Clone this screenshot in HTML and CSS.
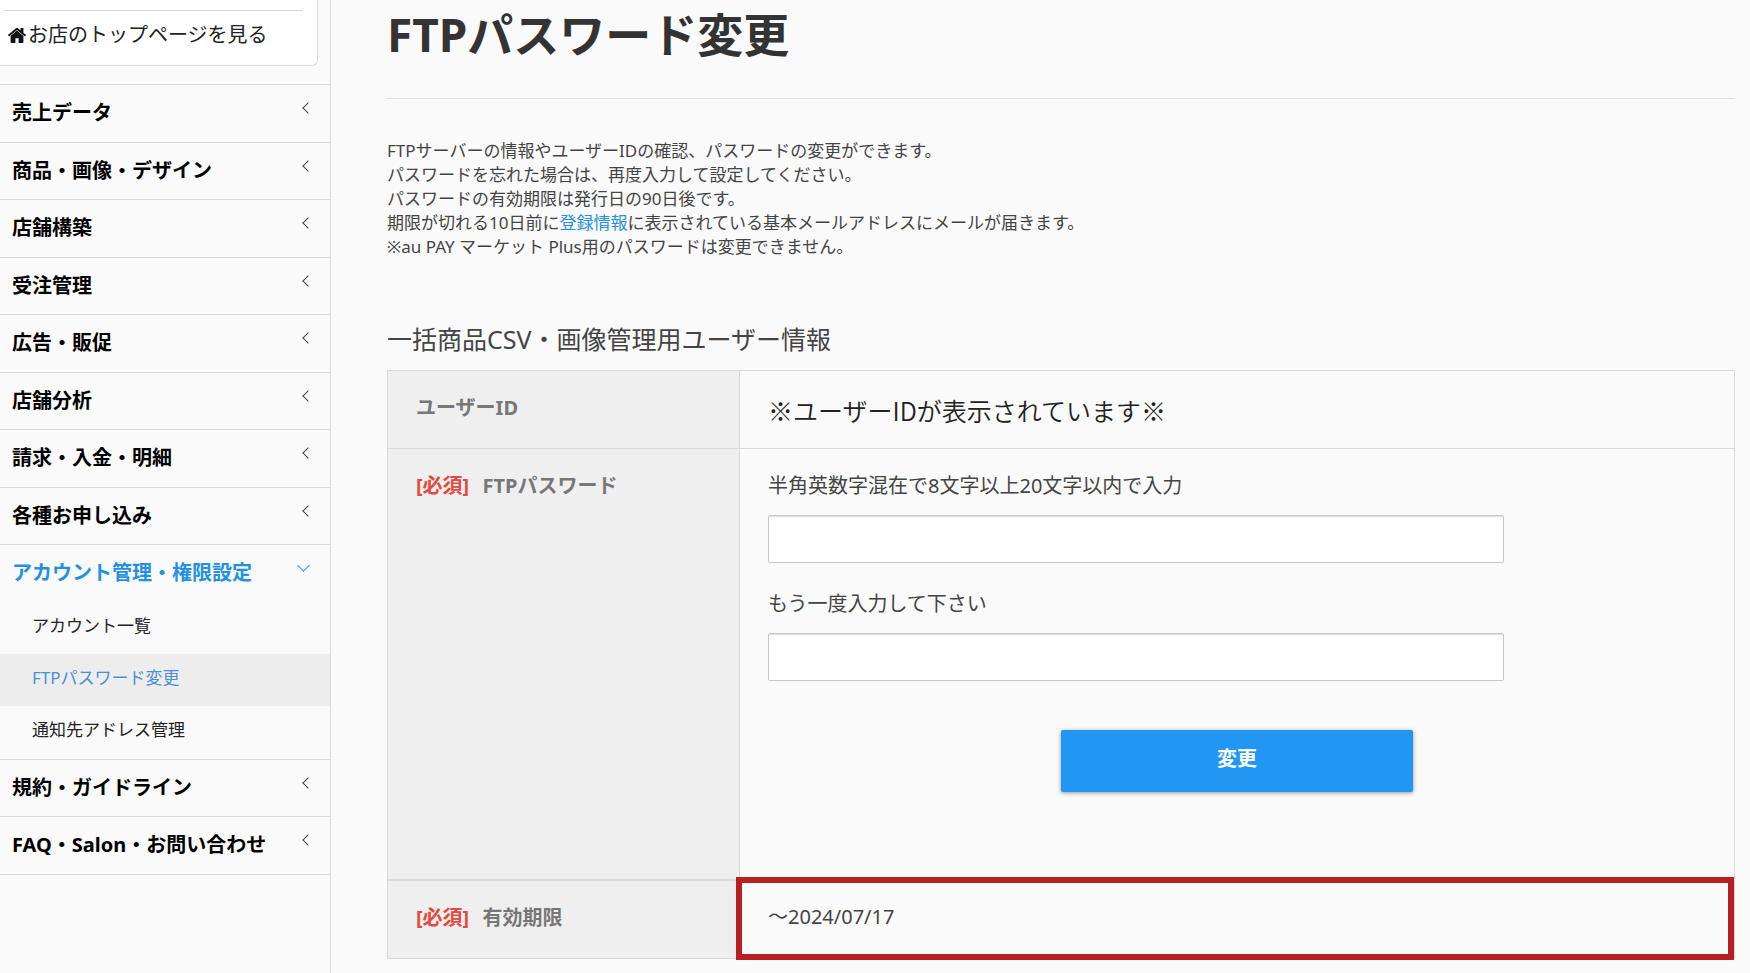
FILE: index.html
```html
<!DOCTYPE html>
<html lang="ja">
<head>
  <meta charset="UTF-8" />
  <meta name="viewport" content="width=device-width, initial-scale=1.0" />
  <title>FTPパスワード変更</title>
  <link rel="stylesheet" href="styles.css">
</head>
<body>
  <aside class="sidebar">
    <div class="shop-box">
      <a class="shop-link" href="#">
        <svg class="home-icon" viewBox="0 0 18 16" width="18" height="16" aria-hidden="true">
          <path d="M9 3.6 2.6 9v6.2c0 .4.3.8.8.8h4v-4.800h3.200V16h4c.5 0 .8-.4.8-.8V9z" />
          <path d="M17.800 7.800 15.400 5.800V1.300c0-.2-.2-.4-.4-.4h-2c-.2 0-.4.2-.4.4v2.200L10 1.300c-.6-.5-1.400-.5-2 0L.2 7.800c-.2.1-.2.4 0 .6l.6.7c.1.2.4.2.6.1L9 2.900l7.600 6.300c.2.1.5.1.6-.1l.6-.7c.2-.2.2-.5 0-.6z" />
        </svg>
        <span>お店のトップページを見る</span>
      </a>
    </div>

    <nav>
      <ul class="menu">
        <li><a class="menu-link" href="#">売上データ</a></li>
        <li><a class="menu-link" href="#">商品・画像・デザイン</a></li>
        <li><a class="menu-link" href="#">店舗構築</a></li>
        <li><a class="menu-link" href="#">受注管理</a></li>
        <li><a class="menu-link" href="#">広告・販促</a></li>
        <li><a class="menu-link" href="#">店舗分析</a></li>
        <li><a class="menu-link" href="#">請求・入金・明細</a></li>
        <li><a class="menu-link" href="#">各種お申し込み</a></li>
        <li>
          <a class="menu-link open" href="#">アカウント管理・権限設定</a>
          <ul class="submenu">
            <li><a href="#">アカウント一覧</a></li>
            <li><a class="active" href="#">FTPパスワード変更</a></li>
            <li><a href="#">通知先アドレス管理</a></li>
          </ul>
        </li>
        <li><a class="menu-link" href="#">規約・ガイドライン</a></li>
        <li><a class="menu-link" href="#">FAQ・Salon・お問い合わせ</a></li>
      </ul>
    </nav>
  </aside>

  <main class="content">
    <h1>FTPパスワード変更</h1>
    <p class="lead">
      FTPサーバーの情報やユーザーIDの確認、パスワードの変更ができます。<br>
      パスワードを忘れた場合は、再度入力して設定してください。<br>
      パスワードの有効期限は発行日の90日後です。<br>
      期限が切れる10日前に<a href="#">登録情報</a>に表示されている基本メールアドレスにメールが届きます。<br>
      ※au PAY マーケット Plus用のパスワードは変更できません。
    </p>

    <h2>一括商品CSV・画像管理用ユーザー情報</h2>
    <form>
      <table class="info">
        <tr>
          <th scope="row">ユーザーID</th>
          <td class="user-id">※ユーザーIDが表示されています※</td>
        </tr>
        <tr>
          <th scope="row"><span class="required">[必須]</span> FTPパスワード</th>
          <td class="password">
            <div class="field">
              <label for="password">半角英数字混在で8文字以上20文字以内で入力</label>
              <input type="password" id="password">
            </div>
            <div class="field">
              <label for="password2">もう一度入力して下さい</label>
              <input type="password" id="password2">
            </div>
            <button type="submit" class="btn">変更</button>
          </td>
        </tr>
        <tr class="limit">
          <th scope="row"><span class="required">[必須]</span> 有効期限</th>
          <td>～2024/07/17<span class="highlight"></span></td>
        </tr>
      </table>
    </form>
  </main>
</body>
</html>
```
FILE: styles.css
```css
* {
  box-sizing: border-box;
}

body {
  margin: 0;
  display: flex;
  min-height: 100vh;
  background: #fafafa;
  color: #444;
  font-family: "Noto Sans", "Noto Sans CJK JP", sans-serif;
  font-size: 20px;
  line-height: 30px;
}

a {
  color: #2490e4;
  text-decoration: none;
}

ul {
  margin: 0;
  padding: 0;
  list-style: none;
}

/* sidebar */
.sidebar {
  flex: 0 0 331px;
  border-right: 1px solid #d9d9d9;
}

.shop-box {
  margin: 0 12px 18px 0;
  padding: 10px 14px 15px 4px;
  background: #fff;
  border: 1px solid #d9d9d9;
  border-width: 0 1px 1px 0;
  border-radius: 0 0 6px 0;
}

.shop-link {
  display: flex;
  align-items: center;
  gap: 2px;
  padding: 9px 0 0 4px;
  border-top: 1px solid #d9d9d9;
  color: #222;
}

.home-icon {
  fill: #111;
}

.menu {
  border-top: 1px solid #d9d9d9;
}

.menu > li {
  border-bottom: 1px solid #d9d9d9;
}

.menu-link {
  display: flex;
  justify-content: space-between;
  padding: 13px 18px 13px 12px;
  color: #000;
  font-weight: bold;
}

.menu > li:nth-child(odd) .menu-link {
  padding-bottom: 14px;
}

.menu-link::after {
  content: "";
  width: 7px;
  height: 7px;
  margin-top: 6px;
  border: solid #444;
  border-width: 0 0 1px 1px;
  transform: rotate(45deg);
}

.menu-link.open {
  color: #2490e4;
}

.menu-link.open::after {
  width: 8px;
  height: 8px;
  margin: 3px 4px 0 0;
  border-color: #2490e4;
  transform: rotate(-45deg);
}

.submenu {
  padding-bottom: 1px;
  font-size: 17px;
}

.submenu a {
  display: block;
  padding: 9px 32px 13px;
  color: #222;
}

.submenu a.active {
  background: #ededed;
  color: #4a90d9;
}

/* main */
.content {
  flex: 1;
  padding: 0 15px 0 56px;
}

h1 {
  margin: 0 0 40px;
  padding: 9px 0 39px;
  border-bottom: 1px solid #e0e0e0;
  color: #333;
  font-size: 46px;
  line-height: 50px;
}

.lead {
  margin: 0 0 65px;
  font-size: 17px;
  line-height: 24px;
}

h2 {
  margin: 0 0 16px;
  font-size: 25px;
  font-weight: normal;
}

.info {
  width: 100%;
  border-collapse: collapse;
}

.info th,
.info td {
  padding: 22px 28px 25px;
  border: 1px solid #d9d9d9;
  text-align: left;
  vertical-align: top;
}

.info th {
  width: 352px;
  background: #efefef;
  color: #777;
}

.info td {
  position: relative;
}

.required {
  margin-right: 8px;
  color: #e2493f;
}

.info .user-id {
  padding-top: 24px;
  padding-bottom: 23px;
  color: #222;
  font-family: "Noto Sans CJK JP", sans-serif;
  font-size: 25px;
  font-weight: 350;
}

.info .password {
  padding-bottom: 87px;
}

.field {
  margin-bottom: 26px;
}

.field label {
  display: block;
  margin-bottom: 14px;
}

.field input {
  display: block;
  width: 100%;
  max-width: 736px;
  height: 48px;
  padding: 0 12px;
  background: #fff;
  border: 1px solid #c8c8c8;
  border-radius: 2px;
  box-shadow: inset 0 1px 1px #ddd;
  font: inherit;
}

.btn {
  display: block;
  width: 352px;
  height: 62px;
  margin: 49px auto 0;
  padding: 0 0 4px;
  background: #2196f3;
  border: 0;
  border-radius: 2px;
  box-shadow: 0 1px 4px rgba(0, 0, 0, 0.4);
  color: #fff;
  font: inherit;
  font-weight: bold;
}

.info .limit th {
  border-top-width: 2px;
}

/* red frame over the expiry cell */
.highlight {
  position: absolute;
  inset: -3px 0 -2px -4px;
  border: 6px solid #b81f23;
}
```
